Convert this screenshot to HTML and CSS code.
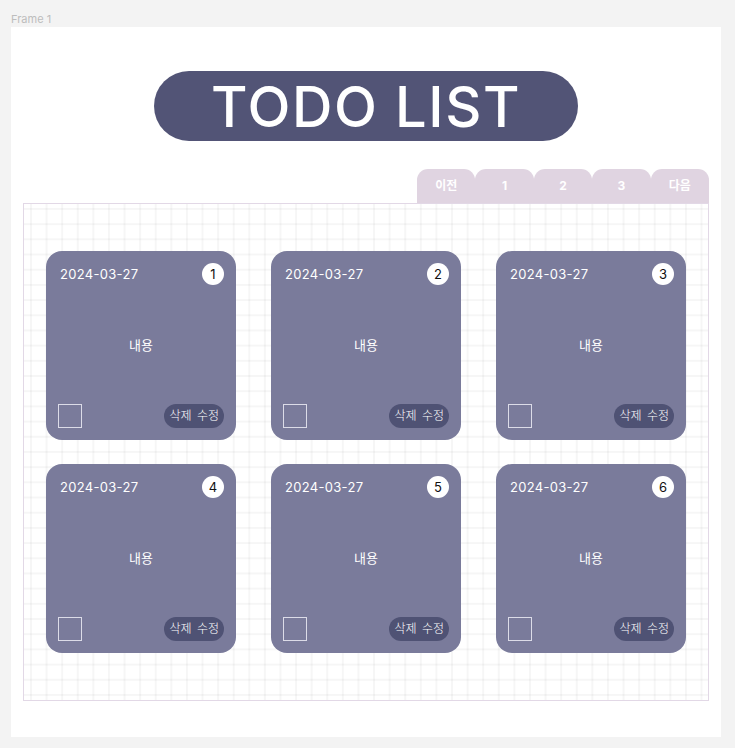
FILE: index.html
```html
<!DOCTYPE html>
<html lang="ko">
<head>
    <meta charset="UTF-8">
    <meta name="viewport" content="width=device-width, initial-scale=1.0">
    <title>Todo List</title>
    <link rel="stylesheet" href="styles.css">
</head>
<body>
    <div class="frame-label">Frame 1</div>
    <div class="frame">
        <h1 class="title">TODO LIST</h1>

        <div class="tabs">
            <div class="tab">이전</div>
            <div class="tab">1</div>
            <div class="tab">2</div>
            <div class="tab">3</div>
            <div class="tab">다음</div>
        </div>

        <div class="board">
            <div class="grid">
                <div class="card">
                    <div class="card-top">
                        <span class="date">2024-03-27</span>
                        <span class="num">1</span>
                    </div>
                    <div class="content">내용</div>
                    <div class="card-bottom">
                        <span class="check"></span>
                        <span class="actions">삭제 수정</span>
                    </div>
                </div>
                <div class="card">
                    <div class="card-top">
                        <span class="date">2024-03-27</span>
                        <span class="num">2</span>
                    </div>
                    <div class="content">내용</div>
                    <div class="card-bottom">
                        <span class="check"></span>
                        <span class="actions">삭제 수정</span>
                    </div>
                </div>
                <div class="card">
                    <div class="card-top">
                        <span class="date">2024-03-27</span>
                        <span class="num">3</span>
                    </div>
                    <div class="content">내용</div>
                    <div class="card-bottom">
                        <span class="check"></span>
                        <span class="actions">삭제 수정</span>
                    </div>
                </div>
                <div class="card">
                    <div class="card-top">
                        <span class="date">2024-03-27</span>
                        <span class="num">4</span>
                    </div>
                    <div class="content">내용</div>
                    <div class="card-bottom">
                        <span class="check"></span>
                        <span class="actions">삭제 수정</span>
                    </div>
                </div>
                <div class="card">
                    <div class="card-top">
                        <span class="date">2024-03-27</span>
                        <span class="num">5</span>
                    </div>
                    <div class="content">내용</div>
                    <div class="card-bottom">
                        <span class="check"></span>
                        <span class="actions">삭제 수정</span>
                    </div>
                </div>
                <div class="card">
                    <div class="card-top">
                        <span class="date">2024-03-27</span>
                        <span class="num">6</span>
                    </div>
                    <div class="content">내용</div>
                    <div class="card-bottom">
                        <span class="check"></span>
                        <span class="actions">삭제 수정</span>
                    </div>
                </div>
            </div>
        </div>
    </div>
</body>
</html>
```

FILE: styles.css
```css
body {
    margin: 0;
    padding: 0;
    background-color: #f3f3f3;
    font-family: Inter, "Noto Sans CJK KR", sans-serif;
    width: 735px;
    height: 748px;
    overflow: hidden;
}
.frame-label {
    height: 27px;
    padding-left: 11px;
    box-sizing: border-box;
    padding-top: 12px;
    font-size: 11px;
    line-height: 14px;
    color: #bdbdbd;
}
.frame {
    margin-left: 11px;
    width: 710px;
    height: 710px;
    background-color: #fff;
    padding: 44px 12px 0 12px;
    box-sizing: border-box;
    display: flex;
    flex-direction: column;
}
.title {
    margin: 0 auto;
    width: 424px;
    height: 70px;
    border-radius: 35px;
    background-color: #525476;
    color: #fff;
    font-size: 56px;
    font-weight: 500;
    line-height: 72px;
    text-align: center;
    letter-spacing: 1.6px;
}

/* pagination tabs */
.tabs {
    display: flex;
    justify-content: flex-end;
    margin-top: 28px;
    height: 35px;
}
.tab {
    width: 58.4px;
    height: 35px;
    background-color: #e0d4e1;
    border-radius: 11px 11px 0 0;
    color: #fff;
    font-size: 12px;
    font-weight: 700;
    line-height: 34px;
    text-align: center;
}
.board {
    height: 498px;
    margin-top: -1px;
    border: 1px solid #e2d8e6;
    box-sizing: border-box;
    background-color: #fff;
    background-image:
        linear-gradient(90deg, rgba(0, 0, 0, 0.035) 2px, transparent 2px),
        linear-gradient(rgba(0, 0, 0, 0.035) 2px, transparent 2px);
    background-size: 15.6px 15.2px;
    background-position: 6px 4px;
    display: flex;
    align-items: center;
    justify-content: center;
}
.grid {
    display: grid;
    grid-template-columns: 190px 190px 190px;
    column-gap: 35px;
    row-gap: 24px;
}
.card {
    height: 189px;
    background-color: #7a7b9b;
    border-radius: 16px;
    padding: 12px 12px 12px 14px;
    box-sizing: border-box;
    display: flex;
    flex-direction: column;
    color: #fff;
}
.card-top {
    display: flex;
    justify-content: space-between;
    align-items: center;
    height: 22px;
}
.date {
    font-size: 13px;
    letter-spacing: 0.3px;
}
.num {
    width: 22px;
    height: 22px;
    border-radius: 50%;
    background-color: #fff;
    color: #111;
    font-size: 13px;
    line-height: 22px;
    text-align: center;
}
.content {
    flex: 1;
    display: flex;
    align-items: center;
    justify-content: center;
    font-size: 13px;
    padding-right: 2px;
}
.card-bottom {
    display: flex;
    justify-content: space-between;
    align-items: center;
    margin-left: -2px;
}
.check {
    width: 24px;
    height: 24px;
    border: 1.5px solid #dcdce8;
    box-sizing: border-box;
}
.actions {
    height: 24px;
    padding: 0 5px;
    border-radius: 12px;
    background-color: #4f5274;
    font-size: 12px;
    font-weight: 300;
    line-height: 24px;
    word-spacing: 2px;
}
```
